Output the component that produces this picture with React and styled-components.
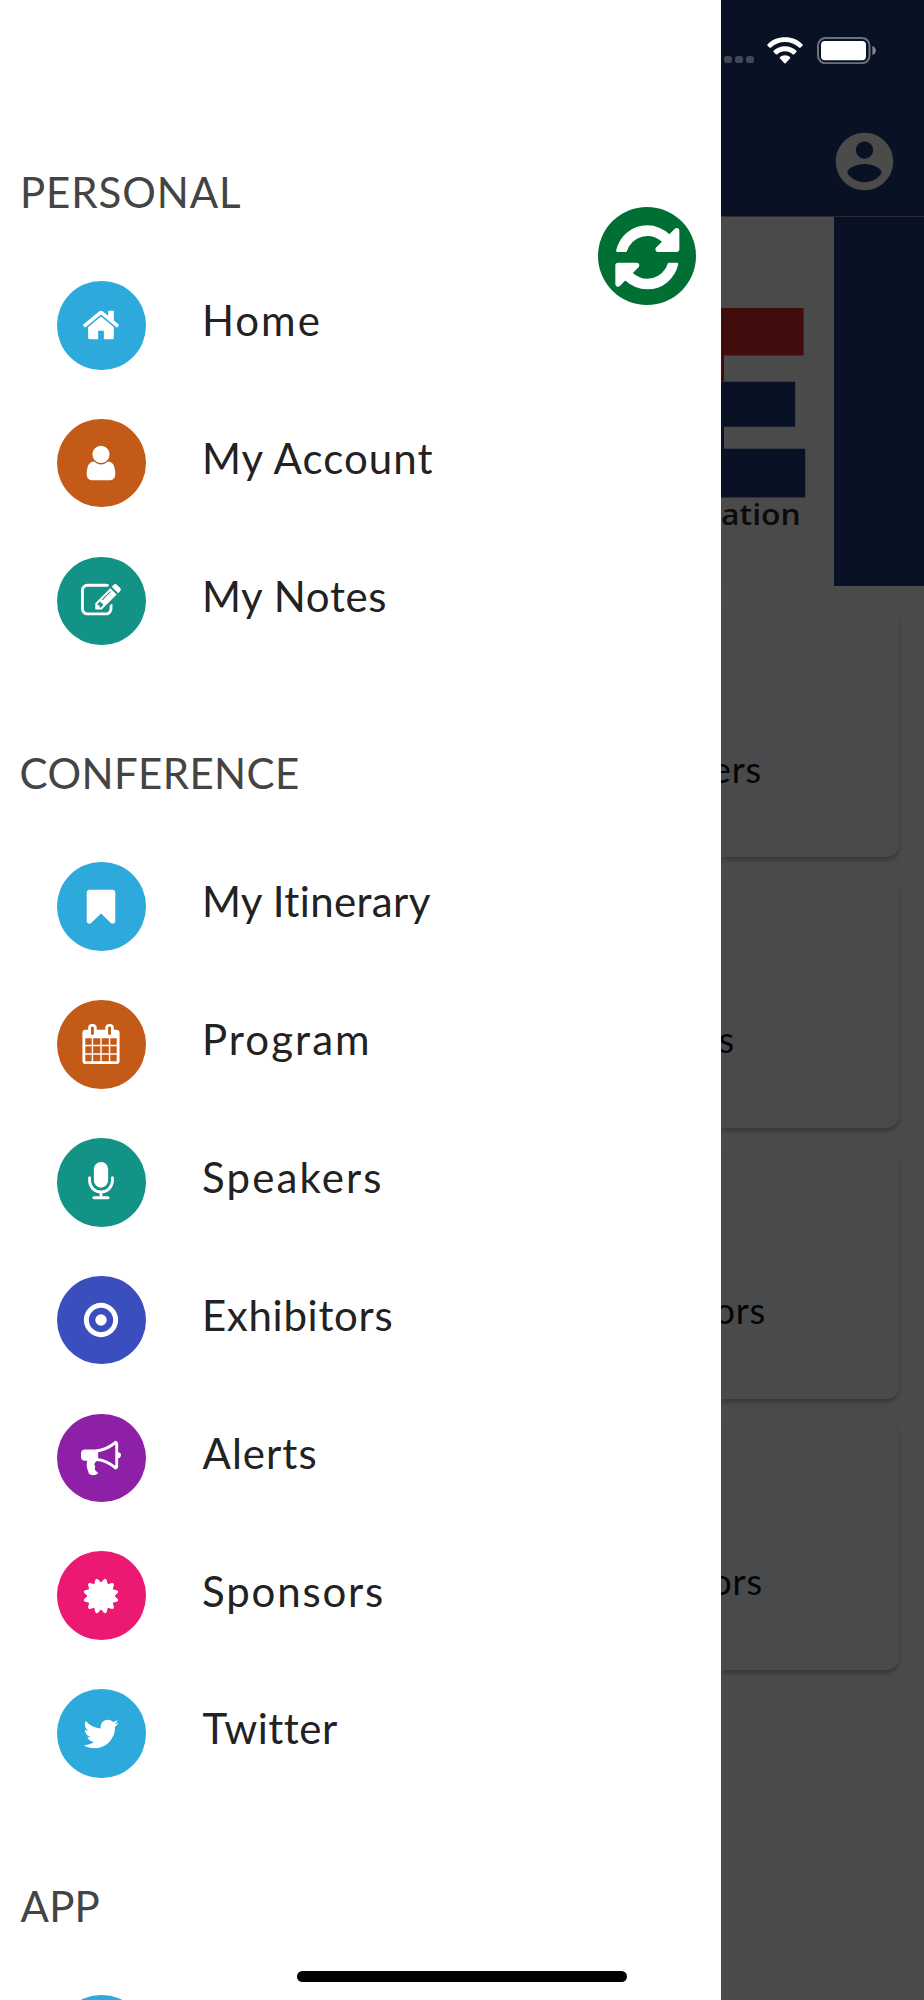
import React from "react";
import styled, { createGlobalStyle } from "styled-components";

const GlobalStyle = createGlobalStyle`
  *, *::before, *::after { box-sizing: border-box; }
  html, body { margin: 0; padding: 0; background: #4b4b4b; }
  body { font-family: Lato, "Open Sans", sans-serif; font-variant-ligatures: none; }
`;

const Screen = styled.div`
  position: relative;
  display: flex;
  width: 924px;
  height: 2000px;
  overflow: hidden;
  background: #4b4b4b;
`;

const Drawer = styled.nav`
  position: relative;
  z-index: 1;
  flex: 0 0 720.6px;
  height: 2000px;
  padding-top: 88.5px;
  overflow: hidden;
  background: #fff;
`;

const SectionTitle = styled.h2`
  height: 167.8px;
  margin: 0;
  padding: 78.3px 0 0 ${(p) => p.$inset}px;
  font-size: 42px;
  line-height: 50px;
  font-weight: 400;
  color: #444;
  letter-spacing: ${(p) => p.$spacing}px;
  white-space: nowrap;
`;

const Row = styled.div`
  display: flex;
  align-items: center;
  height: 137.85px;
  padding-left: 57px;
`;

const Badge = styled.span`
  display: flex;
  align-items: center;
  justify-content: center;
  flex: none;
  width: 88.6px;
  height: 88.6px;
  padding-right: 1.6px;
  border-radius: 50%;
  background: ${(p) => p.$color};
`;

const Label = styled.span`
  margin-left: ${(p) => p.$inset}px;
  padding-bottom: 10.4px;
  font-size: 42px;
  line-height: 50px;
  color: #222;
  letter-spacing: ${(p) => p.$spacing}px;
  white-space: nowrap;
`;

const RefreshButton = styled.button`
  position: absolute;
  top: 207px;
  left: 598px;
  display: flex;
  align-items: center;
  justify-content: center;
  width: 98.4px;
  height: 98.4px;
  padding: 2px 0 0;
  border: 0;
  border-radius: 50%;
  background: #006f33;
`;

const Glyph = styled.svg`
  display: block;
  flex: none;
  width: ${(p) => p.$size}px;
  height: ${(p) => p.$size}px;
  fill: #fff;
`;

const Page = styled.main`
  flex: 1;
  min-width: 0;
  background: #4b4b4b;
`;

const Header = styled.header`
  height: 217px;
  background: #091224;
  border-bottom: 1px solid #2c2b31;
`;

const StatusBar = styled.div`
  display: flex;
  align-items: flex-start;
  padding: 37px 0 0 3.4px;
  height: 133px;
`;

const Signal = styled.div`
  display: flex;
  gap: 3.6px;
  padding-top: 18.7px;
  margin-right: 13.2px;
`;

const SignalDot = styled.i`
  width: 7.6px;
  height: 7.6px;
  border-radius: 2.6px;
  background: #3f4655;
`;

const Wifi = styled.svg`
  display: block;
  width: 36px;
  height: 27px;
  margin-right: 13.6px;
`;

const Battery = styled.svg`
  display: block;
  width: 60px;
  height: 27px;
`;

const Avatar = styled.svg`
  display: block;
  width: 69px;
  height: 69px;
  margin: -5.8px 0 0 109.3px;
  fill: #4b4b4b;
`;

const Banner = styled.div`
  display: flex;
  height: 369px;
  background: #081224;
`;

const LogoPanel = styled.div`
  width: 113.2px;
  padding-top: 90.7px;
  background: #4a4a4a;
`;

const LogoMark = styled.svg`
  display: block;
  width: 100px;
  height: 190px;
`;

const LogoCaption = styled.div`
  width: max-content;
  margin-top: -1.8px;
  font: 600 28.5px/36px "Open Sans", "Noto Sans", sans-serif;
  color: #0b0b0b;
  white-space: nowrap;
  transform: scaleX(1.12);
  transform-origin: left;
`;

const Cards = styled.div`
  display: flex;
  flex-direction: column;
  gap: 24.4px;
  padding: 25px 24.6px 0 0;
`;

const Card = styled.div`
  display: flex;
  justify-content: flex-end;
  height: 246.4px;
  padding: 135.7px ${(p) => p.$end}px 0 0;
  border-radius: 0 13px 13px 0;
  background: #494a4c;
  box-shadow: 0 3px 5px rgba(0, 0, 0, 0.28);
  font-size: 36px;
  line-height: 44px;
  color: #050505;
  letter-spacing: 0.9px;
`;

const HomeIndicator = styled.div`
  position: absolute;
  z-index: 2;
  left: 297px;
  bottom: 18px;
  width: 330px;
  height: 11px;
  border-radius: 6px;
  background: #000;
`;

const paths = {
  home: "M1472 992v480q0 26-19 45t-45 19h-384v-384h-256v384h-384q-26 0-45-19t-19-45v-480q0-1 .5-3t.5-3l575-474 575 474q1 2 1 6zm223-69l-62 74q-8 9-21 11h-3q-13 0-21-7l-692-577-692 577q-12 8-24 7-13-2-21-11l-62-74q-8-10-7-23.5t11-21.5l719-599q32-26 76-26t76 26l244 204v-195q0-14 9-23t23-9h192q14 0 23 9t9 23v408l219 182q10 8 11 21.5t-7 23.5z",
  user: "M1536 1399q0 109-62.5 187t-150.5 78h-854q-88 0-150.5-78t-62.5-187q0-85 8.5-160.5t31.5-152 58.5-131 94-89 134.5-34.5q131 128 313 128t313-128q76 0 134.5 34.5t94 89 58.5 131 31.5 152 8.5 160.5zm-256-887q0 159-112.5 271.5t-271.5 112.5-271.5-112.5-112.5-271.5 112.5-271.5 271.5-112.5 271.5 112.5 112.5 271.5z",
  edit: "M888 1184l116-116-152-152-116 116v56h96v96h56zm440-720q-16-16-33 1l-350 350q-17 17-1 33t33-1l350-350q17-17 1-33zm80 594v190q0 119-84.5 203.5t-203.5 84.5h-832q-119 0-203.5-84.5t-84.5-203.5v-832q0-119 84.5-203.5t203.5-84.5h832q63 0 117 25 15 7 18 23 3 17-9 29l-49 49q-14 14-32 8-23-6-45-6h-832q-66 0-113 47t-47 113v832q0 66 47 113t113 47h832q66 0 113-47t47-113v-126q0-13 9-22l64-64q15-15 35-7t20 29zm-96-738l288 288-672 672h-288v-288zm444 132l-92 92-288-288 92-92q28-28 68-28t68 28l152 152q28 28 28 68t-28 68z",
  bookmark: "M1420 128q23 0 44 9 33 13 52.5 41t19.5 62v1289q0 34-19.5 62t-52.5 41q-19 8-44 8-48 0-83-32l-441-424-441 424q-36 33-83 33-23 0-44-9-33-13-52.5-41t-19.5-62v-1289q0-34 19.5-62t52.5-41q21-9 44-9h1048z",
  calendar: "M192 1664h288v-288h-288v288zm352 0h320v-288h-320v288zm-352-352h288v-320h-288v320zm352 0h320v-320h-320v320zm-352-384h288v-288h-288v288zm736 736h320v-288h-320v288zm-384-736h320v-288h-320v288zm768 736h288v-288h-288v288zm-384-352h320v-320h-320v320zm-352-864v-288q0-13-9.5-22.5t-22.5-9.5h-64q-13 0-22.5 9.5t-9.5 22.5v288q0 13 9.5 22.5t22.5 9.5h64q13 0 22.5-9.5t9.5-22.5zm736 864h288v-320h-288v320zm-384-384h320v-288h-320v288zm384 0h288v-288h-288v288zm32-480v-288q0-13-9.5-22.5t-22.5-9.5h-64q-13 0-22.5 9.5t-9.5 22.5v288q0 13 9.5 22.5t22.5 9.5h64q13 0 22.5-9.5t9.5-22.5zm384-64v1280q0 52-38 90t-90 38h-1408q-52 0-90-38t-38-90v-1280q0-52 38-90t90-38h128v-96q0-66 47-113t113-47h64q66 0 113 47t47 113v96h384v-96q0-66 47-113t113-47h64q66 0 113 47t47 113v96h128q52 0 90 38t38 90z",
  microphone: "M1472 704v128q0 221-147.5 384.5t-364.5 187.5v132h256q26 0 45 19t19 45-19 45-45 19h-640q-26 0-45-19t-19-45 19-45 45-19h256v-132q-217-24-364.5-187.5t-147.5-384.5v-128q0-26 19-45t45-19 45 19 19 45v128q0 185 131.5 316.5t316.5 131.5 316.5-131.5 131.5-316.5v-128q0-26 19-45t45-19 45 19 19 45zm-256-384v512q0 132-94 226t-226 94-226-94-94-226v-512q0-132 94-226t226-94 226 94 94 226z",
  target: "M896 640a256 256 0 1 0 0 512 256 256 0 1 0 0-512zM896 352a544 544 0 1 0 0 1088 544 544 0 1 0 0-1088zM896 128a768 768 0 1 1 0 1536 768 768 0 1 1 0-1536z",
  bullhorn: "M1664 640q53 0 90.5 37.5t37.5 90.5-37.5 90.5-90.5 37.5v384q0 52-38 90t-90 38q-417-347-812-380-58 19-91 66t-31 100.5 40 92.5q-20 33-23 65.5t6 58 33.5 55 48 50 61.5 50.5q-29 58-111.5 83t-168.5 11.5-132-55.5q-7-23-29.5-87.5t-32-94.5-23-89-15-101 3.5-98.5 22-110.5h-122q-66 0-113-47t-47-113v-192q0-66 47-113t113-47h480q435 0 896-384 52 0 90 38t38 90v384zm-128 604v-954q-394 302-768 343v270q377 42 768 341z",
  certificate: "M1504 896l138 135q30 28 20 70-12 41-52 51l-188 48 53 186q12 41-19 70-29 31-70 19l-186-53-48 188q-10 40-51 52-12 2-19 2-31 0-51-22l-135-138-135 138q-28 30-70 20-41-11-51-52l-48-188-186 53q-41 12-70-19-31-29-19-70l53-186-188-48q-40-10-52-51-10-42 20-70l138-135-138-135q-30-28-20-70 12-41 52-51l188-48-53-186q-12-41 19-70 29-31 70-19l186 53 48-188q10-41 51-51 41-12 70 19l135 139 135-139q29-30 70-19 41 10 51 51l48 188 186-53q41-12 70 19 31 29 19 70l-53 186 188 48q40 10 52 51 10 42-20 70z",
  twitter: "M1684 408q-67 98-162 167 1 14 1 42 0 130-38 259.5t-115.5 248.5-184.5 210.5-258 146-323 54.5q-271 0-496-145 35 4 78 4 225 0 401-138-105-2-188-64.5t-114-159.5q33 5 61 5 43 0 85-11-112-23-185.5-111.5t-73.5-205.5v-4q68 38 146 41-66-44-105-115t-39-154q0-88 44-163 121 149 294.5 238.5t371.5 99.5q-8-38-8-74 0-134 94.5-228.5t228.5-94.5q140 0 236 102 109-21 205-78-37 115-142 178 93-10 186-50z",
  refresh: "M1639 1056q0 5-1 7-64 268-268 434.5t-478 166.5q-146 0-282.5-55t-243.5-157l-129 129q-19 19-45 19t-45-19-19-45v-448q0-26 19-45t45-19h448q26 0 45 19t19 45-19 45l-137 137q71 66 161 102t187 36q134 0 250-65t186-179q11-17 53-117 8-23 30-23h192q13 0 22.5 9.5t9.5 22.5zm25-800v448q0 26-19 45t-45 19h-448q-26 0-45-19t-19-45 19-45l138-138q-148-137-349-137-134 0-250 65t-186 179q-11 17-53 117-8 23-30 23h-199q-13 0-22.5-9.5t-9.5-22.5v-7q65-268 270-434.5t480-166.5q146 0 284 55.5t245 156.5l130-129q19-19 45-19t45 19 19 45z",
};

const blue = "#2da9dc";
const orange = "#c45a17";
const teal = "#139386";

const sections = [
  {
    title: "PERSONAL", inset: 20, spacing: 0.9,
    items: [
      { icon: "home", color: blue, text: "Home", inset: 56.3, spacing: 2 },
      { icon: "user", color: orange, text: "My Account", inset: 56.3, spacing: 1.05 },
      { icon: "edit", color: teal, text: "My Notes", inset: 56.3, spacing: 0.65 },
    ],
  },
  {
    title: "CONFERENCE", inset: 19.6, spacing: 0.4,
    items: [
      { icon: "bookmark", color: blue, text: "My Itinerary", inset: 56.3, spacing: 0.35 },
      { icon: "calendar", color: orange, text: "Program", inset: 56.3, spacing: 2.1 },
      { icon: "microphone", color: teal, text: "Speakers", inset: 56.5, spacing: 2.1 },
      { icon: "target", color: "#3a4ebd", text: "Exhibitors", inset: 56.3, spacing: 0.7 },
      { icon: "bullhorn", color: "#8e20a8", text: "Alerts", inset: 57, spacing: 1 },
      { icon: "certificate", color: "#eb1971", text: "Sponsors", inset: 56.5, spacing: 1.8 },
      { icon: "twitter", color: blue, text: "Twitter", inset: 57, spacing: 0.5 },
    ],
  },
  { title: "APP", inset: 20.5, spacing: 0.2, items: [{ color: blue }] },
];

const cards = [
  { text: "ers", end: 137.3 },
  { text: "s", end: 164.5 },
  { text: "ors", end: 133.3 },
  { text: "ors", end: 136.5 },
];

function Icon({ name, size = 40 }) {
  return (
    <Glyph viewBox="0 0 1792 1792" $size={size} overflow="visible" aria-hidden="true">
      <path fillRule={name === "target" ? "evenodd" : "nonzero"} d={paths[name]} />
    </Glyph>
  );
}

export default function App() {
  return (
    <>
      <GlobalStyle />
      <Screen>
        <Drawer>
          {sections.map((s) => (
            <section key={s.title}>
              <SectionTitle $inset={s.inset} $spacing={s.spacing}>{s.title}</SectionTitle>
              {s.items.map((item, i) => (
                <Row key={i}>
                  <Badge $color={item.color}>{item.icon && <Icon name={item.icon} />}</Badge>
                  {item.text && (
                    <Label $inset={item.inset} $spacing={item.spacing}>{item.text}</Label>
                  )}
                </Row>
              ))}
            </section>
          ))}
          <RefreshButton aria-label="Refresh">
            <Icon name="refresh" size={74.7} />
          </RefreshButton>
        </Drawer>
        <Page>
          <Header>
            <StatusBar>
              <Signal><SignalDot /><SignalDot /><SignalDot /></Signal>
              <Wifi viewBox="0 0 36 27" fill="#fff">
                <path d="M18 .2C25 .2 31.2 2.8 35.4 7.2q.8.8 0 1.6l-1.8 1.8q-.8.8-1.6 0C28.3 7 23.4 5 18 5S7.7 7 4 10.6q-.8.8-1.6 0L.6 8.8q-.8-.8 0-1.6C4.8 2.8 11 .2 18 .2z" />
                <path d="M18 9.2c4.5 0 8.4 1.7 11.2 4.4q.8.8 0 1.6l-2 2q-.8.7-1.6 0c-2-1.9-4.6-3-7.6-3s-5.6 1.1-7.6 3q-.8.7-1.6 0l-2-2q-.8-.8 0-1.6C9.6 10.9 13.5 9.2 18 9.2z" />
                <path d="M18 18.3c2 0 3.8.7 5 1.9q.7.7 0 1.4l-4.4 4.6q-.6.6-1.2 0L13 21.6q-.7-.7 0-1.4c1.2-1.2 3-1.9 5-1.9z" />
              </Wifi>
              <Battery viewBox="0 0 60 27">
                <rect x="1" y="1" width="51.5" height="25.2" rx="7.5" fill="none" stroke="#6b707c" strokeWidth="2" />
                <rect x="4" y="4" width="45" height="19.2" rx="4" fill="#fff" />
                <path d="M55.4 9q3.4 1 3.4 4.5t-3.4 4.5z" fill="#848892" />
              </Battery>
            </StatusBar>
            <Avatar viewBox="0 0 24 24">
              <path d="M12 2C6.48 2 2 6.48 2 12s4.48 10 10 10 10-4.48 10-10S17.52 2 12 2zm0 3c1.66 0 3 1.34 3 3s-1.34 3-3 3-3-1.34-3-3 1.34-3 3-3zm0 14.2c-2.5 0-4.71-1.28-6-3.22.03-1.99 4-3.08 6-3.08 1.99 0 5.97 1.09 6 3.08-1.29 1.94-3.5 3.22-6 3.22z" />
            </Avatar>
          </Header>
          <Banner>
            <LogoPanel>
              <LogoMark viewBox="0 0 100 190">
                <path d="M0 0h82.6v47.5H3v26H0z" fill="#400c0c" />
                <path d="M0 73.7h74.2v45H3v22h81.2v48.8H0z" fill="#091224" />
              </LogoMark>
              <LogoCaption>ation</LogoCaption>
            </LogoPanel>
          </Banner>
          <Cards>
            {cards.map((c, i) => <Card key={i} $end={c.end}>{c.text}</Card>)}
          </Cards>
        </Page>
        <HomeIndicator />
      </Screen>
    </>
  );
}
